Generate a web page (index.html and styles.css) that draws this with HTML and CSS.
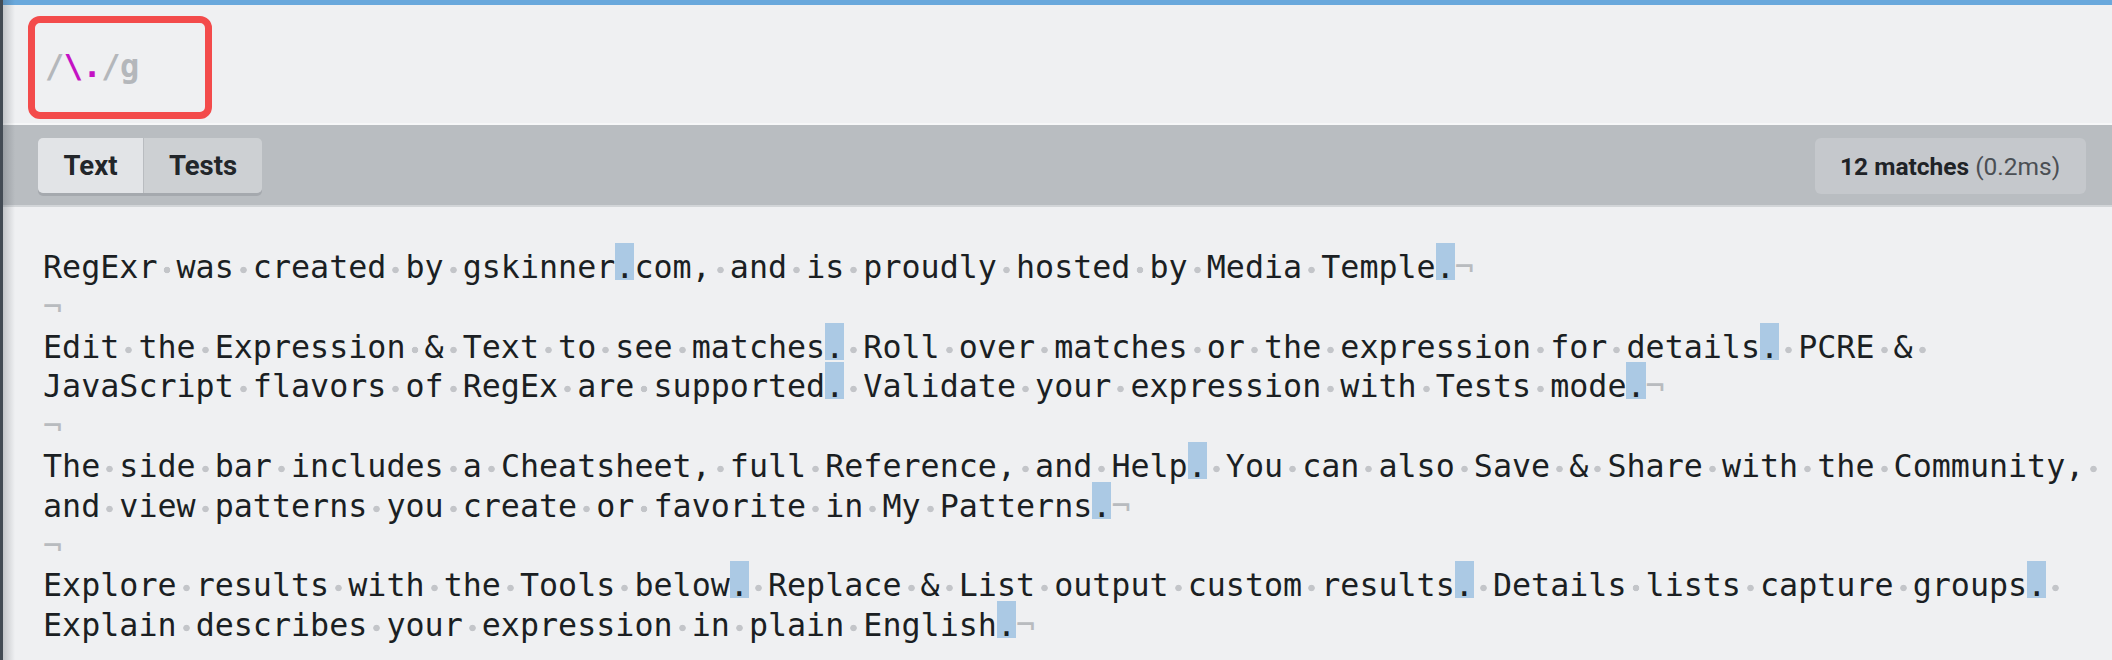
FILE: index.html
```html
<!DOCTYPE html>
<html lang="en">
<head>
<meta charset="utf-8">
<title>RegExr</title>
<link rel="stylesheet" href="styles.css">
</head>
<body>
<div class="app">
  <div class="topline"></div>
  <div class="expr-area">
    <div class="expr-box"><span class="ex-delim">/</span><span class="ex-esc">\.</span><span class="ex-delim">/g</span></div>
  </div>
  <div class="toolbar">
    <div class="tabs">
      <div class="tab tab-active">Text</div>
      <div class="tab tab-tests">Tests</div>
    </div>
    <div class="matches"><b>12 matches</b>&nbsp;(0.2ms)</div>
  </div>
  <div class="editor">
<div class="ln">RegExr<span class="s"> </span>was<span class="s"> </span>created<span class="s"> </span>by<span class="s"> </span>gskinner<span class="m">.</span>com,<span class="s"> </span>and<span class="s"> </span>is<span class="s"> </span>proudly<span class="s"> </span>hosted<span class="s"> </span>by<span class="s"> </span>Media<span class="s"> </span>Temple<span class="m">.</span><span class="p">¬</span></div>
<div class="ln"><span class="p">¬</span></div>
<div class="ln">Edit<span class="s"> </span>the<span class="s"> </span>Expression<span class="s"> </span>&amp;<span class="s"> </span>Text<span class="s"> </span>to<span class="s"> </span>see<span class="s"> </span>matches<span class="m">.</span><span class="s"> </span>Roll<span class="s"> </span>over<span class="s"> </span>matches<span class="s"> </span>or<span class="s"> </span>the<span class="s"> </span>expression<span class="s"> </span>for<span class="s"> </span>details<span class="m">.</span><span class="s"> </span>PCRE<span class="s"> </span>&amp;<span class="s"> </span></div>
<div class="ln">JavaScript<span class="s"> </span>flavors<span class="s"> </span>of<span class="s"> </span>RegEx<span class="s"> </span>are<span class="s"> </span>supported<span class="m">.</span><span class="s"> </span>Validate<span class="s"> </span>your<span class="s"> </span>expression<span class="s"> </span>with<span class="s"> </span>Tests<span class="s"> </span>mode<span class="m">.</span><span class="p">¬</span></div>
<div class="ln"><span class="p">¬</span></div>
<div class="ln">The<span class="s"> </span>side<span class="s"> </span>bar<span class="s"> </span>includes<span class="s"> </span>a<span class="s"> </span>Cheatsheet,<span class="s"> </span>full<span class="s"> </span>Reference,<span class="s"> </span>and<span class="s"> </span>Help<span class="m">.</span><span class="s"> </span>You<span class="s"> </span>can<span class="s"> </span>also<span class="s"> </span>Save<span class="s"> </span>&amp;<span class="s"> </span>Share<span class="s"> </span>with<span class="s"> </span>the<span class="s"> </span>Community,<span class="s"> </span></div>
<div class="ln">and<span class="s"> </span>view<span class="s"> </span>patterns<span class="s"> </span>you<span class="s"> </span>create<span class="s"> </span>or<span class="s"> </span>favorite<span class="s"> </span>in<span class="s"> </span>My<span class="s"> </span>Patterns<span class="m">.</span><span class="p">¬</span></div>
<div class="ln"><span class="p">¬</span></div>
<div class="ln">Explore<span class="s"> </span>results<span class="s"> </span>with<span class="s"> </span>the<span class="s"> </span>Tools<span class="s"> </span>below<span class="m">.</span><span class="s"> </span>Replace<span class="s"> </span>&amp;<span class="s"> </span>List<span class="s"> </span>output<span class="s"> </span>custom<span class="s"> </span>results<span class="m">.</span><span class="s"> </span>Details<span class="s"> </span>lists<span class="s"> </span>capture<span class="s"> </span>groups<span class="m">.</span><span class="s"> </span></div>
<div class="ln">Explain<span class="s"> </span>describes<span class="s"> </span>your<span class="s"> </span>expression<span class="s"> </span>in<span class="s"> </span>plain<span class="s"> </span>English<span class="m">.</span><span class="p">¬</span></div>
  </div>
</div>
</body>
</html>
```
FILE: styles.css
```css
* {
  box-sizing: border-box;
  margin: 0;
  padding: 0;
}

html, body {
  width: 2112px;
  height: 660px;
  overflow: hidden;
  background: #eff0f2;
}

body {
  font-family: Roboto, "Liberation Sans", sans-serif;
}

.app {
  position: relative;
  height: 660px;
  border-left: 3px solid #434b54;
  display: flex;
  flex-direction: column;
  overflow: hidden;
}

.app::after {
  content: "";
  position: absolute;
  left: 0;
  top: 0;
  bottom: 0;
  width: 12px;
  background: linear-gradient(to right, rgba(40, 48, 56, 0.22), rgba(40, 48, 56, 0));
  pointer-events: none;
}

.topline {
  height: 5px;
  flex: none;
  background: #69a8dc;
}

.expr-area {
  height: 120px;
  flex: none;
  padding: 11px 0 0 25px;
  background: #eff0f2;
  border-bottom: 2px solid #f6f7f8;
}

.expr-box {
  width: 184px;
  height: 103px;
  border: 7px solid #f34b4b;
  border-radius: 12px;
  padding: 28px 0 0 10px;
  font-family: "DejaVu Sans Mono", monospace;
  font-weight: bold;
  font-size: 32px;
  line-height: 30px;
  letter-spacing: -0.5px;
  white-space: pre;
}

.ex-delim {
  color: #b4b7bb;
}

.ex-esc {
  color: #c412c4;
}

.toolbar {
  height: 82px;
  flex: none;
  background: #b9bdc1;
  border-bottom: 2px solid #d2d5d8;
  padding: 13px 26px 0 35px;
  display: flex;
  justify-content: space-between;
  align-items: flex-start;
}

.tabs {
  display: flex;
  border-radius: 5px;
  box-shadow: 0 3px 0 #a5a9ae;
}

.tab {
  height: 55px;
  display: flex;
  align-items: center;
  justify-content: center;
  font-weight: bold;
  font-size: 27.5px;
  color: #22262a;
}

.tab-active {
  width: 105px;
  background: #e2e4e7;
  border-radius: 5px 0 0 5px;
}

.tab-tests {
  width: 119px;
  background: #cdd0d3;
  border-left: 1px solid #b9bcc0;
  border-radius: 0 5px 5px 0;
}

.matches {
  width: 271px;
  height: 56px;
  background: #c5c8cc;
  border-radius: 6px;
  display: flex;
  align-items: center;
  padding: 0 25px;
  font-size: 24.5px;
  color: #4b4f54;
  white-space: nowrap;
}

.matches b {
  color: #1f2327;
  font-weight: bold;
}

.editor {
  flex: 1;
  background: #eff0f2;
  padding: 41px 0 0 40px;
  font-family: "DejaVu Sans Mono", "Liberation Mono", monospace;
  font-size: 31.7px;
  line-height: 39.8px;
  color: #1b1f23;
  overflow: hidden;
}

.ln {
  white-space: pre;
  height: 39.8px;
}

.s {
  background: radial-gradient(circle at 50% 21px, #c3c5c9 0, #c3c5c9 2.9px, rgba(195, 197, 201, 0) 3.6px);
}

.m {
  padding-top: 6px;
  background: linear-gradient(#abc9e4, #abc9e4) 0 0 / 100% calc(100% - 5px) no-repeat;
}

.p {
  color: #b8bbbf;
}
```
